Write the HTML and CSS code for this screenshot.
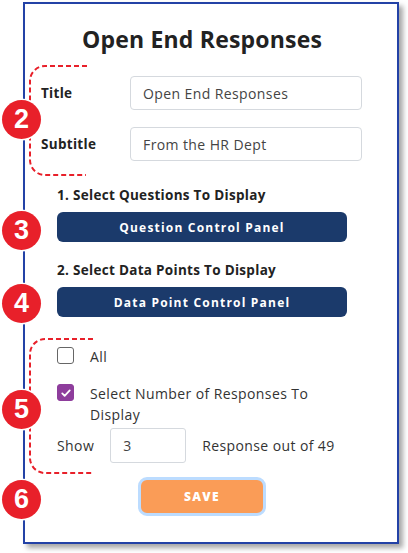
FILE: index.html
```html
<!DOCTYPE html>
<html lang="en">
<head>
    <meta charset="UTF-8">
    <meta name="viewport" content="width=device-width, initial-scale=1.0">
    <title>Open End Responses</title>
    <link rel="stylesheet" href="styles.css">
</head>
<body>
    <div class="page">
        <div class="card">
            <h1>Open End Responses</h1>
            <div class="field">
                <label for="title">Title</label>
                <input id="title" type="text" value="Open End Responses">
            </div>
            <div class="field">
                <label for="subtitle">Subtitle</label>
                <input id="subtitle" type="text" value="From the HR Dept">
            </div>
            <div class="section">
                <h3>1. Select Questions To Display</h3>
                <button class="panel-btn">Question Control Panel</button>
                <h3>2. Select Data Points To Display</h3>
                <button class="panel-btn">Data Point Control Panel</button>
            </div>
            <div class="responses">
                <label class="check">
                    <span class="box"></span>
                    <span>All</span>
                </label>
                <label class="check">
                    <span class="box checked">
                        <svg viewBox="0 0 16 16" width="12" height="12"><path d="M3 8.5l3.2 3.2L13 4.5" fill="none" stroke="#fff" stroke-width="2.4" stroke-linecap="round" stroke-linejoin="round"/></svg>
                    </span>
                    <span class="check-text">Select Number of Responses To Display</span>
                </label>
                <div class="show-row">
                    <span>Show</span>
                    <input type="text" value="3">
                    <span>Response out of 49</span>
                </div>
            </div>
            <div class="save-wrap">
                <button class="save">SAVE</button>
            </div>
        </div>

        <!-- annotation overlay -->
        <svg class="bracket b1" width="70" height="112" viewBox="0 0 70 112">
            <path d="M63 1H21a15 15 0 0 0 -15 15V95a15 15 0 0 0 15 15H62" />
        </svg>
        <svg class="bracket b2" width="70" height="138" viewBox="0 0 70 138">
            <path d="M69 1H21a15 15 0 0 0 -15 15V120a15 15 0 0 0 15 15H68" />
        </svg>
        <div class="badge n2">2</div>
        <div class="badge n3">3</div>
        <div class="badge n4">4</div>
        <div class="badge n5">5</div>
        <div class="badge n6">6</div>
    </div>
</body>
</html>
```

FILE: styles.css
```css
body {
    margin: 0;
    font-family: 'Open Sans', sans-serif;
    color: #333;
    background: #fff;
}
.page {
    position: relative;
    width: 408px;
    height: 553px;
}
.card {
    position: absolute;
    left: 23px;
    top: 2px;
    width: 372px;
    height: 538px;
    border: 2.5px solid #2342a6;
    box-shadow: 4px 4px 5px rgba(0, 0, 0, 0.35);
    background: #fff;
}
h1 {
    margin: 20px 18px 22px 0;
    font-size: 23px;
    line-height: 30px;
    font-weight: 700;
    text-align: center;
    color: #222;
    letter-spacing: 0.2px;
}
.field {
    display: flex;
    align-items: center;
    margin: 0 35px 17px 16px;
}
.field label {
    flex: none;
    width: 89px;
    font-size: 13.5px;
    font-weight: 700;
    color: #222;
    letter-spacing: 0.3px;
}
.field input {
    flex: 1;
    min-width: 0;
    height: 34px;
    box-sizing: border-box;
    border: 1px solid #d5d9de;
    border-radius: 4px;
    padding: 0 12px;
    font-family: inherit;
    font-size: 14px;
    letter-spacing: 0.4px;
    color: #444;
}
.section {
    margin: 24px 50px 0 32px;
}
.section h3 {
    margin: 0 0 7px;
    font-size: 13.5px;
    line-height: 20px;
    font-weight: 700;
    color: #222;
    letter-spacing: 0.3px;
}
.panel-btn {
    display: block;
    width: 100%;
    height: 30px;
    margin-bottom: 18px;
    border: none;
    border-radius: 6px;
    background: #1b3a6b;
    color: #fff;
    font-family: inherit;
    font-size: 12px;
    font-weight: 700;
    letter-spacing: 1.2px;
}
.panel-btn:last-child {
    margin-bottom: 0;
}
.responses {
    margin: 29px 40px 0 32px;
    font-size: 14px;
    letter-spacing: 0.4px;
    color: #333;
}
.check {
    display: flex;
    align-items: flex-start;
    line-height: 21px;
    margin-bottom: 16px;
}
.check-text {
    max-width: 245px;
}
.check .box {
    flex: none;
    width: 17px;
    height: 17px;
    box-sizing: border-box;
    border: 1.5px solid #666;
    border-radius: 3px;
    margin: 1px 16px 0 0;
    display: flex;
    align-items: center;
    justify-content: center;
}
.check .box.checked {
    background: #8e3d9c;
    border-color: #8e3d9c;
}
.check + .check {
    margin-bottom: 5px;
}
.show-row {
    display: flex;
    align-items: center;
    margin-top: -2px;
}
.show-row input {
    width: 76px;
    height: 35px;
    box-sizing: border-box;
    margin: 0 16px 0 16px;
    border: 1px solid #d5d9de;
    border-radius: 3px;
    padding: 0 12px;
    font-family: inherit;
    font-size: 14px;
    color: #444;
}
.save-wrap {
    text-align: center;
    margin: 14px 18px 0 0;
}
.save {
    width: 128px;
    height: 39px;
    border: 3px solid #bcdcff;
    border-radius: 9px;
    background: #fa9c57;
    color: #fff;
    font-family: inherit;
    font-size: 12px;
    font-weight: 800;
    letter-spacing: 1.4px;
}
.bracket {
    position: absolute;
    fill: none;
    stroke: #e8202a;
    stroke-width: 2;
    stroke-dasharray: 5 3;
}
.b1 { left: 24px; top: 65px; }
.b2 { left: 24px; top: 338px; }
.badge {
    position: absolute;
    left: 2px;
    width: 39px;
    height: 39px;
    border-radius: 50%;
    background: #e8202a;
    box-shadow: 0 0 0 1.5px #fff;
    color: #fff;
    font-family: 'Liberation Sans', Arial, sans-serif;
    font-size: 27px;
    font-weight: 700;
    line-height: 39px;
    text-align: center;
}
.n2 { top: 100px; }
.n3 { top: 211px; }
.n4 { top: 284px; }
.n5 { top: 390px; }
.n6 { top: 480px; }
```
